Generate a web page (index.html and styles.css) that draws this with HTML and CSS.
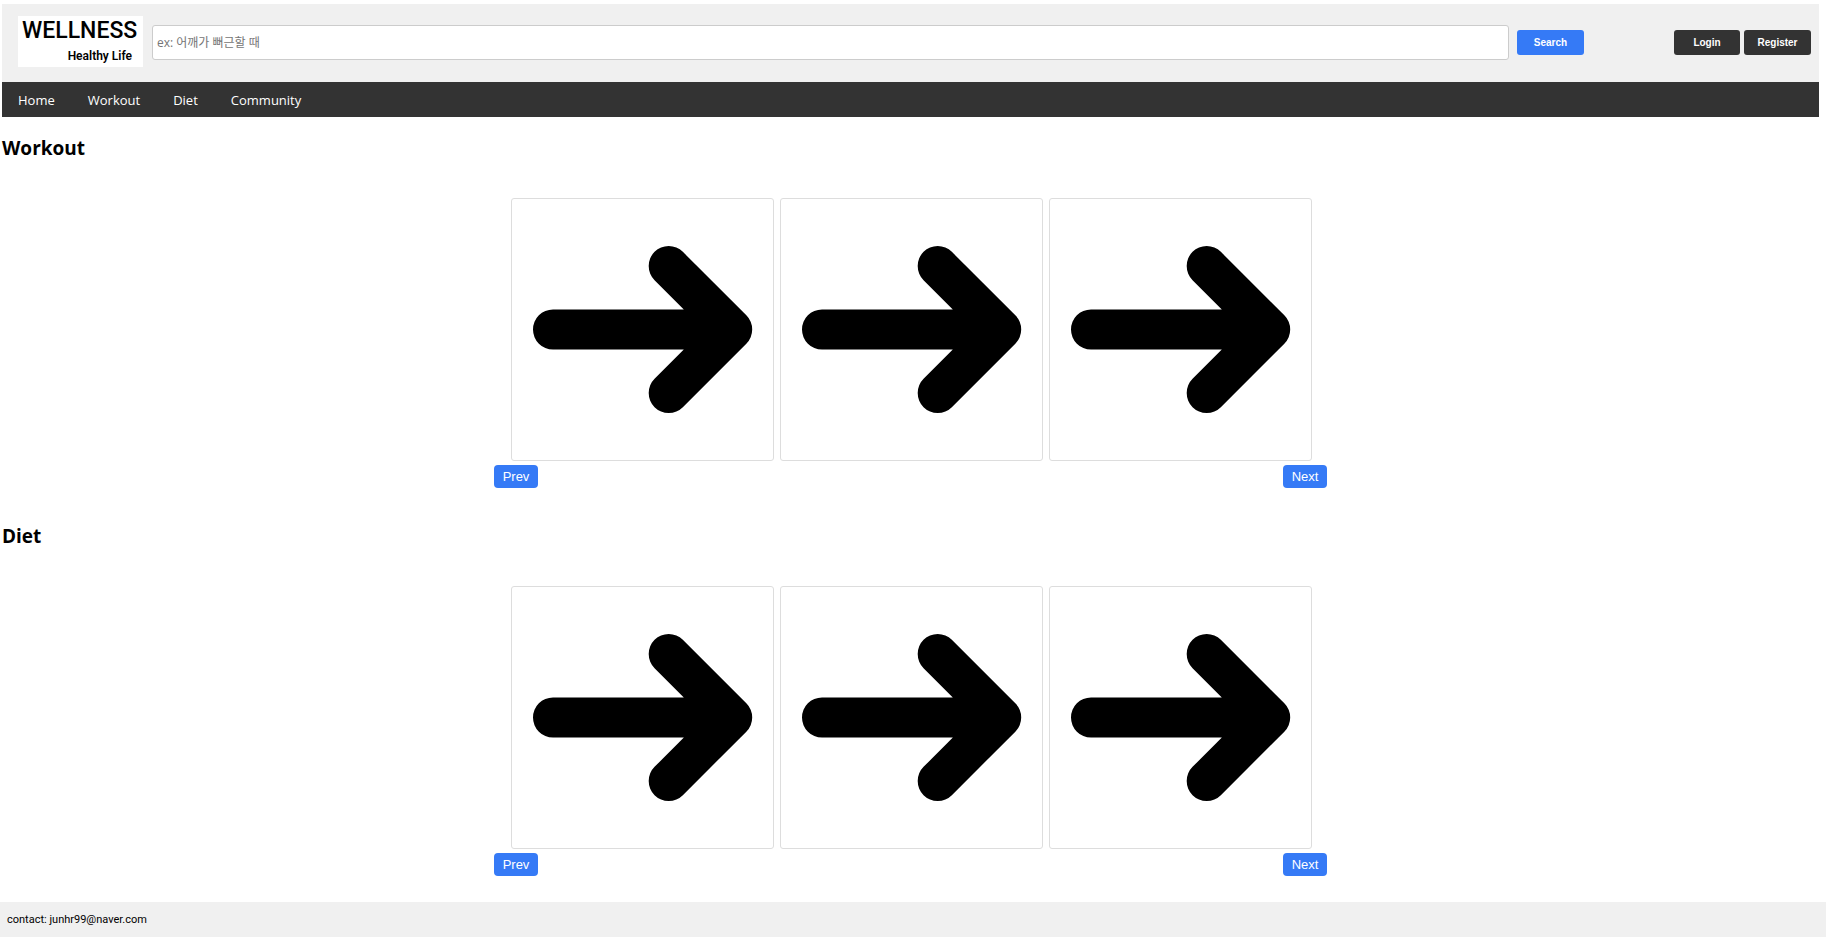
FILE: index.html
```html
<!DOCTYPE html>
<html lang="ko">
<head>
<meta charset="utf-8">
<title>Wellness</title>
<link rel="stylesheet" href="styles.css">
</head>
<body>
<svg class="sprite" aria-hidden="true">
  <symbol id="arrow" viewBox="0 0 261 261">
    <path d="M41 130.5H220M156.700 67L220.200 130.500L156.700 194" fill="none" stroke="#000" stroke-width="40" stroke-linecap="round" stroke-linejoin="round"/>
  </symbol>
</svg>
<div class="page">
  <header class="header">
    <a class="logo" href="#"><span class="logo-title">WELLNESS</span><span class="logo-sub">Healthy Life</span></a>
    <form class="search">
      <input class="search-input" type="text" aria-label="Search" placeholder="ex: 어깨가 뻐근할 때">
      <button class="button primary" type="button">Search</button>
    </form>
    <div class="account">
      <button class="button login" type="button">Login</button>
      <button class="button" type="button">Register</button>
    </div>
  </header>
  <nav class="nav">
    <a href="#">Home</a>
    <a href="#">Workout</a>
    <a href="#">Diet</a>
    <a href="#">Community</a>
  </nav>
  <main>
    <section class="section">
      <h2>Workout</h2>
      <div class="carousel">
        <div class="cards">
          <div class="card"><svg role="img" aria-label="Workout 1"><use href="#arrow"/></svg></div>
          <div class="card"><svg role="img" aria-label="Workout 2"><use href="#arrow"/></svg></div>
          <div class="card"><svg role="img" aria-label="Workout 3"><use href="#arrow"/></svg></div>
        </div>
        <div class="controls">
          <button class="step" type="button">Prev</button>
          <button class="step" type="button">Next</button>
        </div>
      </div>
    </section>
    <section class="section">
      <h2>Diet</h2>
      <div class="carousel">
        <div class="cards">
          <div class="card"><svg role="img" aria-label="Diet 1"><use href="#arrow"/></svg></div>
          <div class="card"><svg role="img" aria-label="Diet 2"><use href="#arrow"/></svg></div>
          <div class="card"><svg role="img" aria-label="Diet 3"><use href="#arrow"/></svg></div>
        </div>
        <div class="controls">
          <button class="step" type="button">Prev</button>
          <button class="step" type="button">Next</button>
        </div>
      </div>
    </section>
  </main>
</div>
<footer class="footer">contact: junhr99@naver.com</footer>
</body>
</html>
```
FILE: styles.css
```css
* {
  box-sizing: border-box;
}

body {
  display: flex;
  flex-direction: column;
  min-height: 100vh;
  margin: 0;
  background: #fff;
  color: #000;
  font-family: "Open Sans", "Noto Sans CJK KR", sans-serif;
}

.sprite {
  position: absolute;
  width: 0;
  height: 0;
}

.page {
  flex: 1;
  padding: 4px 8px 0 2px;
}

.header {
  display: flex;
  align-items: center;
  padding: 12px 8px 15px 16px;
  background: #f0f0f0;
}

.logo {
  display: flex;
  flex-direction: column;
  width: 125px;
  height: 51px;
  margin-right: 9px;
  padding: 0 4px;
  background: #fff;
  color: #000;
  text-decoration: none;
  white-space: nowrap;
}

.logo-title {
  font: 500 23px/30px Roboto, sans-serif;
}

.logo-sub {
  padding-right: 7px;
  font: 600 12px/20px Roboto, sans-serif;
  text-align: right;
}

.search {
  display: flex;
  flex: 1;
  align-items: center;
  gap: 8px;
  margin: 2px 90px 0 0;
}

.search-input {
  flex: 1;
  min-width: 0;
  height: 35px;
  padding: 0 4px;
  border: 1px solid #ccc;
  border-radius: 3px;
  background: #fff;
  font: 12px "Open Sans", "Noto Sans CJK KR", sans-serif;
}

.search-input::placeholder {
  color: #757575;
}

.account {
  display: flex;
  gap: 4px;
  margin-top: 2px;
}

.button {
  width: 67px;
  height: 25px;
  padding: 0;
  border: 0;
  border-radius: 3px;
  background: #333;
  color: #fff;
  font: bold 10px "Liberation Sans", Arial, sans-serif;
}

.login {
  width: 66px;
}

.primary {
  background: #357af6;
}

.nav {
  display: flex;
  align-items: center;
  gap: 33px;
  height: 35px;
  padding: 0 16px;
  background: #333;
}

.nav a {
  color: #fff;
  font-size: 13px;
  line-height: 18px;
  text-decoration: none;
}

.section {
  padding: 17px 0;
}

.section h2 {
  margin: 0 0 36px;
  font-size: 19px;
  font-weight: 700;
  line-height: 28px;
}

.carousel {
  width: 833px;
  max-width: 100%;
  margin: 0 auto;
}

.cards {
  display: grid;
  grid-template-columns: repeat(3, 1fr);
  gap: 6px;
  padding: 0 15px 0 17px;
}

.card {
  aspect-ratio: 1;
  border: 1px solid #ddd;
  border-radius: 3px;
}

.card svg {
  display: block;
  width: 100%;
  height: 100%;
}

.controls {
  display: flex;
  justify-content: space-between;
  margin-top: 4px;
}

.step {
  width: 44px;
  height: 23px;
  padding: 0;
  border: 0;
  border-radius: 4px;
  background: #357af6;
  color: #fff;
  font: 13px "Liberation Sans", Arial, sans-serif;
}

.footer {
  margin-right: 1px;
  padding: 10px 7px 9px;
  background: #f0f0f0;
  font: 11px/16px Roboto, sans-serif;
}
```
